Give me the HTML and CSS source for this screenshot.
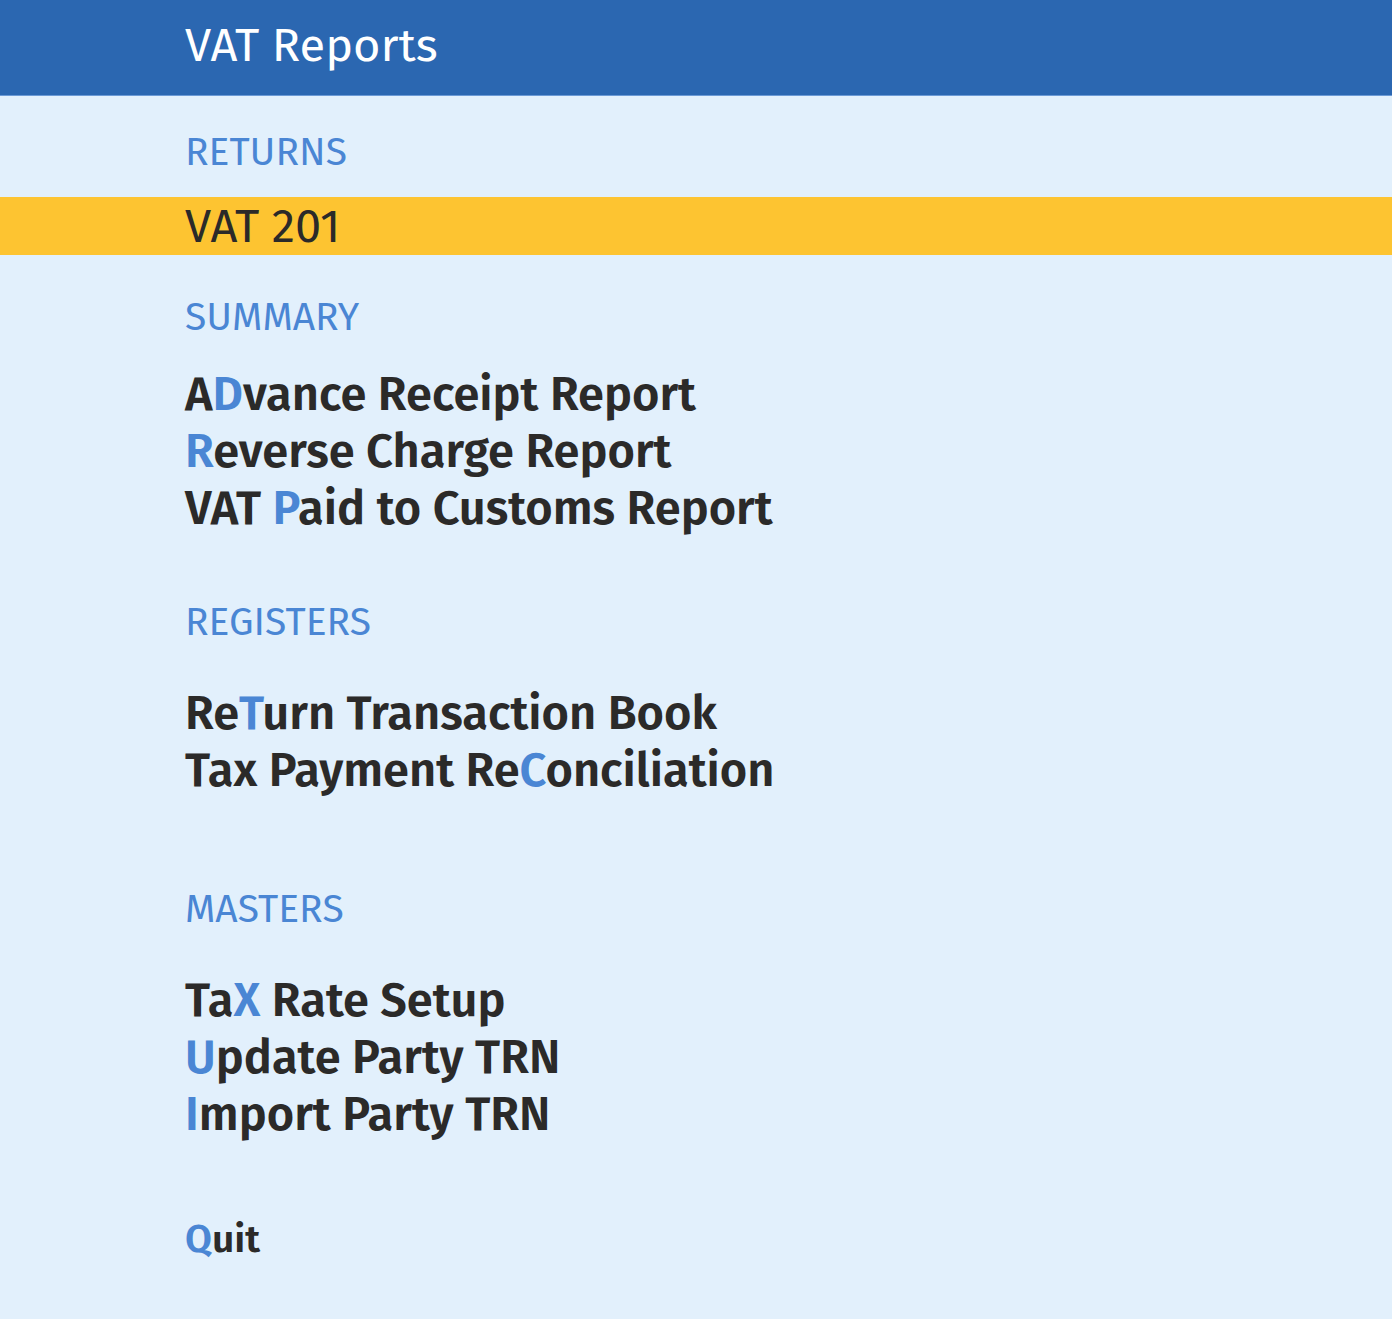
FILE: index.html
```html
<!DOCTYPE html>
<html lang="en">
<head>
    <meta charset="UTF-8">
    <meta name="viewport" content="width=device-width, initial-scale=1.0">
    <title>VAT Reports</title>
    <link rel="stylesheet" href="styles.css">
</head>
<body>
    <div class="header">
        <h1>VAT Reports</h1>
    </div>

    <div class="menu">
        <div class="group-title first">RETURNS</div>
        <div class="item selected">VAT 201</div>

        <div class="group-title summary">SUMMARY</div>
        <div class="items">
            <div class="item">A<span class="key">D</span>vance Receipt Report</div>
            <div class="item"><span class="key">R</span>everse Charge Report</div>
            <div class="item">VAT <span class="key">P</span>aid to Customs Report</div>
        </div>

        <div class="group-title registers">REGISTERS</div>
        <div class="items">
            <div class="item">Re<span class="key">T</span>urn Transaction Book</div>
            <div class="item">Tax Payment Re<span class="key">C</span>onciliation</div>
        </div>

        <div class="group-title masters">MASTERS</div>
        <div class="items">
            <div class="item">Ta<span class="key">X</span> Rate Setup</div>
            <div class="item"><span class="key">U</span>pdate Party TRN</div>
            <div class="item"><span class="key">I</span>mport Party TRN</div>
        </div>

        <div class="item quit"><span class="key">Q</span>uit</div>
    </div>
</body>
</html>
```

FILE: styles.css
```css
body {
    margin: 0;
    background-color: #e2f0fc;
    font-family: "Fira Sans", "Noto Sans", "Open Sans", sans-serif;
    color: #2b2a29;
}
.header {
    background: #2b67b1;
    height: 95px;
    border-bottom: 1px solid #6b9ad6;
    padding-left: 185px;
    display: flex;
    align-items: center;
}
.header h1 {
    margin: 0 0 6px;
    color: white;
    font-size: 47px;
    font-weight: 400;
}
.menu {
    padding-bottom: 40px;
}
.group-title {
    padding-left: 185px;
    height: 57px;
    line-height: 57px;
    font-size: 39px;
    color: #4a86d4;
}
.group-title.first {
    margin-top: 28px;
}
.group-title.summary {
    margin-top: 34px;
}
.group-title.registers {
    margin-top: 57px;
}
.group-title.masters {
    margin-top: 82px;
}
.items {
    margin-top: 20px;
}
.registers + .items,
.masters + .items {
    margin-top: 34px;
}
.item {
    padding-left: 185px;
    height: 57px;
    line-height: 57px;
    font-size: 47px;
    font-weight: 600;
}
.item.selected {
    margin-top: 16px;
    height: 58px;
    line-height: 58px;
    background: #fdc431;
    font-weight: 400;
}
.item.quit {
    margin-top: 68px;
    font-size: 39px;
}
.key {
    color: #4a86d4;
}
```
